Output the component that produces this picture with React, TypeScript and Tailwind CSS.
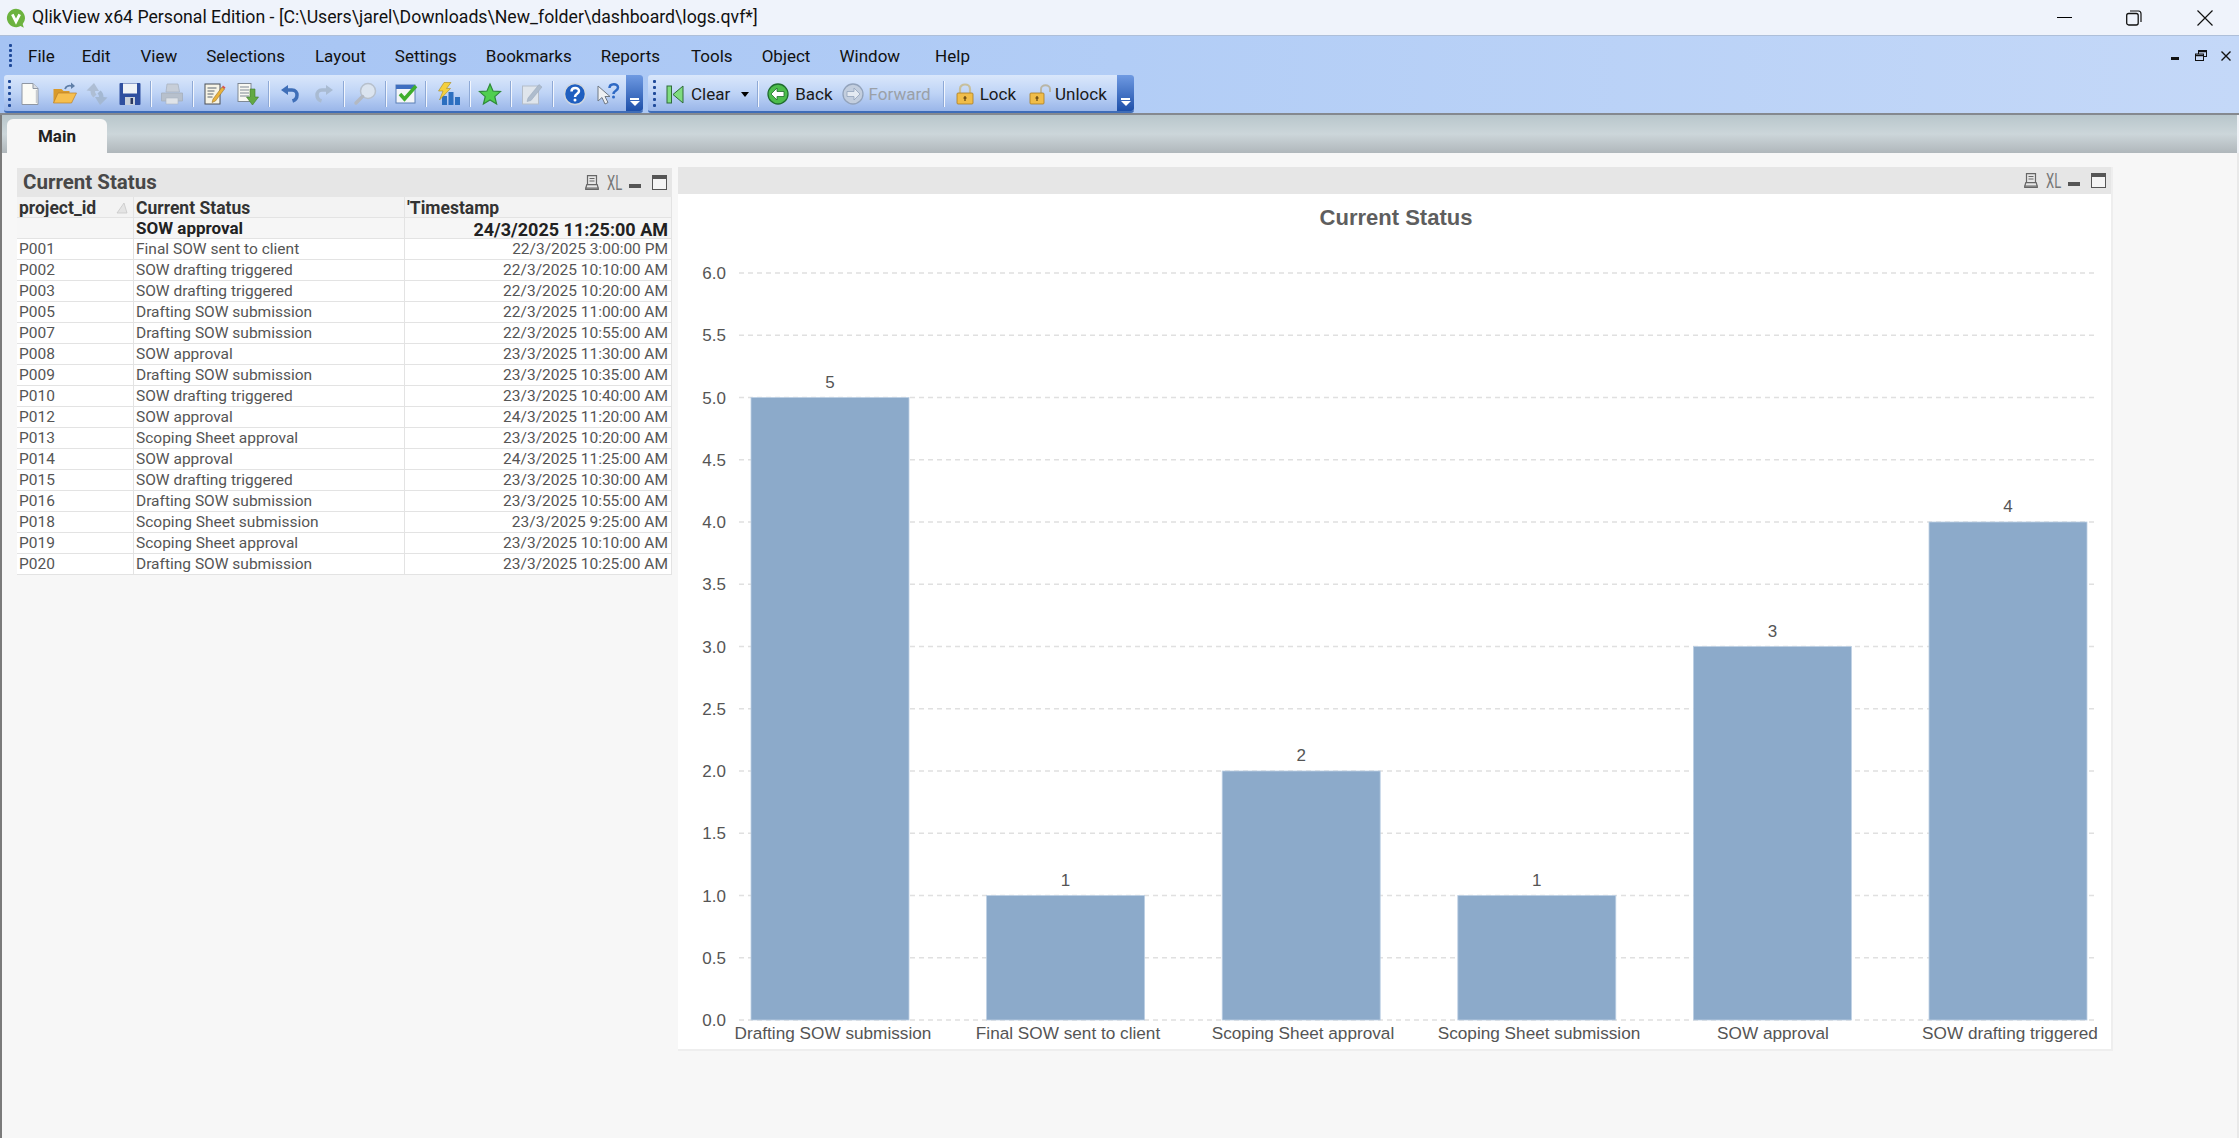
import React from "react";

const ui = "font-['Roboto',sans-serif]";

const Ico = ({ children, className = "" }: { children: React.ReactNode; className?: string }) => (
  <svg viewBox="0 0 24 24" className={"w-[24px] h-[24px] block shrink-0 " + className}>{children}</svg>
);

const NewDoc = () => (
  <Ico>
    <path d="M4 1.500h11l5 5v16H4z" fill="#fbfbf6" stroke="#8f97a3" strokeWidth="1" />
    <path d="M15 1.500v5h5" fill="#d9dde3" stroke="#8f97a3" strokeWidth="1" />
    <path d="M18.500 8v13" stroke="#c9ccd0" strokeWidth="1.500" />
  </Ico>
);
const OpenFolder = () => (
  <Ico>
    <path d="M.5 7h8l2 2h6v12H.5z" fill="#d99a2b" />
    <path d="M.5 21l4.500-10h18.500l-5 10z" fill="#f6bf4f" stroke="#b9802a" strokeWidth=".7" />
    <path d="M12 7c1-3 4-4 7-3" fill="none" stroke="#5f7fa8" strokeWidth="1.800" />
    <path d="M18 .5l4 3.500-4 3z" fill="#5f7fa8" />
  </Ico>
);
const Reload = () => (
  <Ico>
    <path d="M9 1L1.500 8.500l4 .5c0 3 1 5 3 6.500l3-3c-1-.8-1.500-2-1.500-3.500h4z" fill="#aebed4" />
    <path d="M15 23l7.500-7.500-4-.5c0-3-1-5-3-6.500l-3 3c1 .8 1.500 2 1.500 3.500h-4z" fill="#a4b8d2" />
  </Ico>
);
const Save = () => (
  <Ico>
    <rect x="1.500" y="1" width="21" height="22" rx="1" fill="#2f4f9f" />
    <rect x="5" y="1.500" width="14" height="10" fill="#eef2f7" />
    <rect x="7" y="15" width="10" height="8" fill="#c9d1dc" />
    <rect x="12.500" y="16" width="2.500" height="6" fill="#2b3860" />
  </Ico>
);
const Printer = () => (
  <Ico>
    <path d="M7 2h11l1.500 8H6z" fill="#c7ced8" stroke="#aab4c1" strokeWidth=".8" />
    <path d="M1.500 11h21v8h-21z" fill="#b7c0cc" stroke="#a5afbc" strokeWidth=".8" />
    <rect x="6" y="16" width="12" height="6" fill="#dfe3e8" stroke="#aab4c1" strokeWidth=".6" />
  </Ico>
);
const EditNote = () => (
  <Ico>
    <rect x="3" y="2" width="15" height="20" fill="#f7f4e6" stroke="#4a4f57" strokeWidth="1" />
    <path d="M5.500 6h9M5.500 9h7M5.500 12h6M5.500 15h5" stroke="#5a6470" strokeWidth="1" />
    <path d="M11 17l9-12 2.500 2-9 12-3.500 1.500z" fill="#e9b23c" stroke="#8a6420" strokeWidth=".5" />
    <path d="M20 5l1-1.500 2.500 2L22.500 7z" fill="#d9534f" />
  </Ico>
);
const ImportDoc = () => (
  <Ico>
    <rect x="2" y="1.500" width="13" height="18" fill="#f8f8f2" stroke="#77808c" strokeWidth=".9" />
    <path d="M4 5h9M4 8h9M4 11h9M4 14h9" stroke="#7f8894" strokeWidth="1" />
    <path d="M14 7h5v8h3.500l-6 8-6-8H14z" fill="#62a944" stroke="#3f7a2c" strokeWidth=".6" />
  </Ico>
);
const Undo = () => (
  <Ico>
    <path d="M8 8h6c3.500 0 5 2.500 5 5s-1.500 5-4.500 6" fill="none" stroke="#3f6fb8" strokeWidth="3.500" />
    <path d="M3 8l7-5v10z" fill="#3f6fb8" />
  </Ico>
);
const Redo = () => (
  <Ico>
    <path d="M16 8h-6c-3.500 0-5 2.500-5 5s1.500 5 4.500 6" fill="none" stroke="#a9bbd2" strokeWidth="3.500" />
    <path d="M21 8l-7-5v10z" fill="#a9bbd2" />
  </Ico>
);
const Search = () => (
  <Ico>
    <circle cx="15" cy="9" r="7.500" fill="#dbe4ef" stroke="#b7c0cc" strokeWidth="1.500" />
    <path d="M9.500 14.500L3 21" stroke="#b3b9c2" strokeWidth="3.500" strokeLinecap="round" />
  </Ico>
);
const Check = () => (
  <Ico>
    <rect x="2" y="3" width="19" height="18" fill="#f3f5f8" stroke="#5b7fb5" strokeWidth="1" />
    <rect x="2" y="3" width="19" height="4" fill="#3f6fc0" />
    <path d="M6 12l4.500 5L22 4" fill="none" stroke="#3fae2d" strokeWidth="3.500" />
  </Ico>
);
const Chart = () => (
  <Ico>
    <rect x="5" y="14" width="5" height="9" fill="#2c6fc0" />
    <rect x="11.500" y="10" width="5" height="13" fill="#2c6fc0" />
    <rect x="18" y="15" width="5" height="8" fill="#2c6fc0" />
    <path d="M7 .5h7L9.500 6.500h4L2.500 18l3.500-9H1.500z" fill="#f4d03f" stroke="#a88a20" strokeWidth=".6" />
  </Ico>
);
const Star = () => (
  <Ico>
    <path d="M12 2l3 7 7.500.6-5.700 5 1.800 7.400-6.600-4-6.600 4 1.800-7.400-5.700-5L9 9z" fill="#4fce4f" stroke="#2f8a3a" strokeWidth="1.200" />
  </Ico>
);
const EditGrey = () => (
  <Ico>
    <rect x="2.500" y="4" width="16" height="18" fill="#dfe5ec" stroke="#b4bdc9" strokeWidth="1" />
    <path d="M8 16L19 2.500l3 2.500L11 18.500l-4 1z" fill="#aebccd" stroke="#97a7bb" strokeWidth=".5" />
  </Ico>
);
const Help = () => (
  <Ico>
    <circle cx="12" cy="12" r="10.500" fill="#1f5fc0" stroke="#cfd6df" strokeWidth="1.500" />
    <path d="M8.500 9.500c0-4.500 7.500-4.500 7.500-.5 0 3-4 2.500-4 6" fill="none" stroke="#fff" strokeWidth="2.500" />
    <circle cx="12" cy="18" r="1.500" fill="#fff" />
  </Ico>
);
const WhatsThis = () => (
  <Ico>
    <path d="M2 4v15l4-3.500 3 6.500 3-1.500-3-6h5z" fill="#eef0f3" stroke="#6f7884" strokeWidth="1" />
    <path d="M13.500 6c0-5 8.500-5 8.500-.5 0 3.500-4.500 3-4.500 6.500" fill="none" stroke="#2e69c4" strokeWidth="2.500" />
    <circle cx="17.500" cy="15" r="1.500" fill="#2e69c4" />
  </Ico>
);
const ClearIcon = () => (
  <Ico>
    <rect x="4" y="4" width="4.500" height="17" fill="#7fdc7f" stroke="#2e6b3a" strokeWidth="1" />
    <path d="M20 4v17L10 12.500z" fill="#7fdc7f" stroke="#2e6b3a" strokeWidth="1" />
  </Ico>
);
const Nav = ({ on, flip }: { on: boolean; flip?: boolean }) => (
  <Ico>
    <circle cx="12" cy="12" r="10" fill={on ? "#4cbd4c" : "#c3cede"} stroke={on ? "#1f6d2f" : "#93a3bb"} strokeWidth="1.300" />
    <path
      d={flip ? "M13 6l6 6-6 6v-3.500H6v-5h7z" : "M11 6l-6 6 6 6v-3.500h7v-5h-7z"}
      fill={on ? "#fff" : "#e4eaf2"}
      stroke={on ? "#1f6d2f" : "#93a3bb"}
      strokeWidth=".8"
    />
  </Ico>
);
const Lock = ({ open }: { open?: boolean }) => (
  <Ico>
    {open ? (
      <path d="M13 12V7c0-5 9-5 9 0v3" fill="none" stroke="#b9b6a6" strokeWidth="2" />
    ) : (
      <path d="M7 12V7c0-6 10-6 10 0v5" fill="none" stroke="#c7bf9c" strokeWidth="2.200" />
    )}
    <rect x={open ? 2 : 4} y="11" width={open ? 14 : 16} height="11" rx="1" fill="#f0bd4a" stroke="#a97b22" strokeWidth=".8" />
    <path d={open ? "M9 14v5M7.500 16h3" : "M12 14v5M10.500 16h3"} stroke="#6b4b12" strokeWidth="1.300" />
  </Ico>
);

const Grip = ({ className = "" }: { className?: string }) => (
  <div className={"flex flex-col gap-[3px] w-[3px] " + className}>
    {[0, 1, 2, 3, 4].map((i) => (
      <span key={i} className="block w-[3px] h-[3px] bg-[#1f4a9a] rounded-[1px]" />
    ))}
  </div>
);
const Sep = ({ className = "" }: { className?: string }) => (
  <div className={"w-[2px] h-[26px] bg-[#f2f6fd] border-l border-[#8ea9d6] shrink-0 " + className} />
);
const Chevron = () => (
  <div className="ml-auto w-[17px] h-full rounded-r-[3px] bg-gradient-to-b from-[#6f9ae2] to-[#1d4fa9] flex flex-col items-center justify-end pb-[5px] gap-[1px]">
    <span className="block w-[9px] h-[2px] bg-white" />
    <span className="block w-0 h-0 border-x-[5px] border-x-transparent border-t-[5px] border-t-white" />
  </div>
);

const tools: { c: React.ReactNode; m: string }[] = [
  { c: <NewDoc />, m: "ml-[2px]" },
  { c: <OpenFolder />, m: "ml-[11px]" },
  { c: <Reload />, m: "ml-[8px]" },
  { c: <Save />, m: "ml-[9px]" },
  { c: <Sep />, m: "ml-[8px]" },
  { c: <Printer />, m: "ml-[8px]" },
  { c: <Sep />, m: "ml-[8px]" },
  { c: <EditNote />, m: "ml-[8px]" },
  { c: <ImportDoc />, m: "ml-[10px]" },
  { c: <Sep />, m: "ml-[8px]" },
  { c: <Undo />, m: "ml-[8px]" },
  { c: <Redo />, m: "ml-[10px]" },
  { c: <Sep />, m: "ml-[7px]" },
  { c: <Search />, m: "ml-[8px]" },
  { c: <Sep />, m: "ml-[8px]" },
  { c: <Check />, m: "ml-[7px]" },
  { c: <Sep />, m: "ml-[7px]" },
  { c: <Chart />, m: "ml-[10px]" },
  { c: <Sep />, m: "ml-[8px]" },
  { c: <Star />, m: "ml-[7px]" },
  { c: <Sep />, m: "ml-[8px]" },
  { c: <EditGrey />, m: "ml-[8px]" },
  { c: <Sep />, m: "ml-[8px]" },
  { c: <Help />, m: "ml-[9px]" },
  { c: <WhatsThis />, m: "ml-[9px]" },
];

const menus: [string, string][] = [
  ["File", "ml-[16px]"],
  ["Edit", "ml-[27px]"],
  ["View", "ml-[30px]"],
  ["Selections", "ml-[29px]"],
  ["Layout", "ml-[30px]"],
  ["Settings", "ml-[29px]"],
  ["Bookmarks", "ml-[29px]"],
  ["Reports", "ml-[29px]"],
  ["Tools", "ml-[31px]"],
  ["Object", "ml-[29px]"],
  ["Window", "ml-[29px]"],
  ["Help", "ml-[35px]"],
];

const rows: [string, string, string][] = [
  ["P001", "Final SOW sent to client", "22/3/2025 3:00:00 PM"],
  ["P002", "SOW drafting triggered", "22/3/2025 10:10:00 AM"],
  ["P003", "SOW drafting triggered", "22/3/2025 10:20:00 AM"],
  ["P005", "Drafting SOW submission", "22/3/2025 11:00:00 AM"],
  ["P007", "Drafting SOW submission", "22/3/2025 10:55:00 AM"],
  ["P008", "SOW approval", "23/3/2025 11:30:00 AM"],
  ["P009", "Drafting SOW submission", "23/3/2025 10:35:00 AM"],
  ["P010", "SOW drafting triggered", "23/3/2025 10:40:00 AM"],
  ["P012", "SOW approval", "24/3/2025 11:20:00 AM"],
  ["P013", "Scoping Sheet approval", "23/3/2025 10:20:00 AM"],
  ["P014", "SOW approval", "24/3/2025 11:25:00 AM"],
  ["P015", "SOW drafting triggered", "23/3/2025 10:30:00 AM"],
  ["P016", "Drafting SOW submission", "23/3/2025 10:55:00 AM"],
  ["P018", "Scoping Sheet submission", "23/3/2025 9:25:00 AM"],
  ["P019", "Scoping Sheet approval", "23/3/2025 10:10:00 AM"],
  ["P020", "Drafting SOW submission", "23/3/2025 10:25:00 AM"],
];

const CaptionIcons = () => (
  <div className="flex items-center h-full text-[#777]">
    <svg viewBox="0 0 14 15" className="w-[14px] h-[15px]">
      <path d="M2.500.7h9v9h-9zM.7 13h12.600v1.300H.7zM1.800 9.700h10.400l1 3.300H.8zM4.500 3.500h5M4.500 6h5" fill="none" stroke="#666" strokeWidth="1.200" />
    </svg>
    <span className={"ml-[8px] w-[15px] text-[20px] leading-none scale-x-[0.65] origin-left " + ui}>XL</span>
    <span className="ml-[7px] mt-[7px] block w-[12px] h-[4px] bg-[#555]" />
    <span className="ml-[11px] block w-[15px] h-[15px] border-[1.500px] border-t-[4px] border-[#555] bg-[#f4f4f4]" />
  </div>
);

const bars = [
  { x: 751, v: 5, label: "Drafting SOW submission", lx: 833 },
  { x: 986.6, v: 1, label: "Final SOW sent to client", lx: 1068 },
  { x: 1222.2, v: 2, label: "Scoping Sheet approval", lx: 1303 },
  { x: 1457.8, v: 1, label: "Scoping Sheet submission", lx: 1539 },
  { x: 1693.4, v: 3, label: "SOW approval", lx: 1773 },
  { x: 1929, v: 4, label: "SOW drafting triggered", lx: 2010 },
];
const ticks = [6, 5.5, 5, 4.5, 4, 3.5, 3, 2.5, 2, 1.5, 1, 0.5, 0];
const yOf = (v: number) => 1021 - v * 124.5;

const BarChart = () => (
  <svg viewBox="678 195 1433 855" className="w-[1433px] h-[855px] block font-['Liberation_Sans',Arial,sans-serif]">
    <text x="1396" y="225.500" textAnchor="middle" fontSize="22" fontWeight="700" fill="#5e5e5e">
      Current Status
    </text>
    {ticks.map((t) => (
      <g key={t}>
        <line x1="739" x2="2096" y1={yOf(t)} y2={yOf(t)} stroke="#e0e0e0" strokeWidth="1.500" strokeDasharray="5 4" />
        <text x="726" y={yOf(t) + 6} textAnchor="end" fontSize="17" fill="#555">
          {t.toFixed(1)}
        </text>
      </g>
    ))}
    {bars.map((b) => (
      <g key={b.x}>
        <rect x={b.x} y={yOf(b.v)} width="158" height={b.v * 124.5} fill="#8caaca" stroke="#bdd0e4" strokeWidth=".8" />
        <text x={b.x + 79} y={yOf(b.v) - 10} textAnchor="middle" fontSize="17" fill="#555">
          {b.v}
        </text>
        <text x={b.lx} y="1040" textAnchor="middle" fontSize="17.200" fill="#555">
          {b.label}
        </text>
      </g>
    ))}
  </svg>
);

const cell = "px-[3px] pt-[2px] flex items-center border-r border-b border-[#e3e3e3] whitespace-nowrap overflow-hidden";
const head = cell + " font-bold text-[17.500px] text-[#333] bg-[#f3f3f3] !px-[2px]";

export default function App() {
  return (
    <div className={"w-[2239px] h-[1138px] overflow-hidden flex flex-col bg-[#f7f7f7] text-black " + ui}>
      {/* Title bar */}
      <div className="h-[35px] shrink-0 bg-[#eff3fb] flex items-center relative">
        <svg viewBox="0 0 24 24" className="ml-[5px] w-[22px] h-[22px] shrink-0">
          <path d="M12 2a10 10 0 1 0 5 18.700l3.500 1.800-1.200-4A10 10 0 0 0 12 2z" fill="#6cb33f" />
          <path d="M8 8l4 8 4-8" fill="none" stroke="#fff" strokeWidth="3" />
        </svg>
        <span className="ml-[5px] text-[17.700px] text-[#111] whitespace-nowrap">
          QlikView x64 Personal Edition - [C:\Users\jarel\Downloads\New_folder\dashboard\logs.qvf*]
        </span>
        <div className="ml-auto flex items-center h-full">
          <span className="block w-[15px] h-[1px] bg-black" />
          <svg viewBox="0 0 16 16" className="ml-[54px] w-[16px] h-[16px]">
            <rect x=".7" y="3.500" width="11.500" height="11.500" rx="2" fill="none" stroke="#111" strokeWidth="1.300" />
            <path d="M4 1h8.500A2.700 2.700 0 0 1 15 3.700V12" fill="none" stroke="#111" strokeWidth="1.200" />
          </svg>
          <svg viewBox="0 0 16 16" className="ml-[55px] mr-[26px] w-[16px] h-[16px]">
            <path d="M.5.5l15 15M15.500.5l-15 15" stroke="#111" strokeWidth="1.200" />
          </svg>
        </div>
      </div>

      {/* Menu + toolbars */}
      <div className="h-[78px] shrink-0 border-t border-[#aebfd9] bg-gradient-to-r from-[#a5c3f3] via-[#b2cdf6] to-[#c4d8f8]">
        <div className="h-[39px] flex items-center text-[17px] text-[#111] relative">
          <Grip className="ml-[9px] !gap-[2px]" />
          {menus.map(([m, c]) => (
            <span key={m} className={c + " mt-[2px]"}>
              {m}
            </span>
          ))}
          <div className="ml-auto flex items-center mr-[8px]">
            <span className="block w-[8px] h-[3px] mt-[6px] bg-[#111]" />
            <svg viewBox="0 0 12 11" className="ml-[16px] w-[12px] h-[11px]">
              <rect x="3.500" y=".5" width="8" height="6" fill="#c8d9f5" stroke="#111" />
              <rect x=".5" y="4" width="8" height="6.500" fill="#c8d9f5" stroke="#111" />
              <path d="M.5 5.500h8M3.500 1.500h8" stroke="#111" strokeWidth="1.500" />
            </svg>
            <svg viewBox="0 0 10 10" className="ml-[14px] w-[10px] h-[10px]">
              <path d="M.5.5l9 9M9.500.5l-9 9" stroke="#111" strokeWidth="1.400" />
            </svg>
          </div>
        </div>
        <div className="h-[38px] flex">
          <div className="ml-[4px] w-[639px] h-full flex items-center rounded-[3px] border-b-2 border-[#3f6db8] bg-gradient-to-b from-[#dae7fb] via-[#bfd4f6] to-[#9ab6e9]">
            <Grip className="ml-[4px] mr-[5px]" />
            {tools.map((t, i) => (
              <div key={i} className={t.m + " shrink-0 mt-[2px]"}>
                {t.c}
              </div>
            ))}
            <Chevron />
          </div>
          <div className="ml-[5px] w-[486px] h-full flex items-center rounded-[3px] border-b-2 border-[#3f6db8] bg-gradient-to-b from-[#dae7fb] via-[#bfd4f6] to-[#9ab6e9] text-[17px] text-[#1a1a1a]">
            <Grip className="ml-[5px]" />
            <div className="ml-[7px] mt-[2px]">
              <ClearIcon />
            </div>
            <span className="ml-[4px] mt-[3px]">Clear</span>
            <span className="ml-[11px] mt-[2px] w-0 h-0 border-x-[4px] border-x-transparent border-t-[5px] border-t-black" />
            <Sep className="ml-[8px] mt-[2px]" />
            <div className="ml-[7px] mt-[2px]">
              <Nav on />
            </div>
            <span className="ml-[5px] mt-[3px]">Back</span>
            <div className="ml-[8px] mt-[2px]">
              <Nav on={false} flip />
            </div>
            <span className="ml-[4px] mt-[3px] text-[#9aa0a8]">Forward</span>
            <Sep className="ml-[12px] mt-[2px]" />
            <div className="ml-[8px] mt-[2px]">
              <Lock />
            </div>
            <span className="ml-[3px] mt-[3px]">Lock</span>
            <div className="ml-[12px] mt-[2px]">
              <Lock open />
            </div>
            <span className="ml-[3px] mt-[3px]">Unlock</span>
            <Chevron />
          </div>
        </div>
      </div>

      {/* Separator */}
      <div className="h-[2px] shrink-0 bg-[#85898f]" />

      {/* Tab strip */}
      <div className="h-[38px] shrink-0 flex items-end border-l-2 border-[#7b7b7b] border-r-2 border-r-[#eef1f6] bg-gradient-to-b from-[#b8c6cb] via-[#ccd6da] to-[#b0b7bb] pl-[5px]">
        <div className="w-[100px] h-[34px] pt-[2px] rounded-t-[6px] bg-[#f7f7f7] flex items-center justify-center font-bold text-[17px] text-[#222]">
          Main
        </div>
      </div>

      {/* Sheet */}
      <div className="flex-1 border-l-2 border-[#7b7b7b] border-r-2 border-r-[#e9e9e9] pl-[15px] pt-[15px] flex items-start gap-[6px]">
        {/* Table box */}
        <div className="w-[655px] shrink-0">
          <div className="h-[29px] bg-[#e6e6e6] flex items-center justify-between pl-[6px] pr-[5px]">
            <span className="font-bold text-[20.500px] text-[#484848]">Current Status</span>
            <CaptionIcons />
          </div>
          <div className="grid grid-cols-[117px_271px_1fr] auto-rows-[21px] text-[15.500px] text-[#555] bg-white">
            <div className={head + " relative"}>
              project_id
              <svg viewBox="0 0 12 12" className="absolute right-[5px] top-[5px] w-[12px] h-[12px]">
                <path d="M1 11h10L8 1z" fill="#e4e4e4" stroke="#c8c8c8" strokeWidth=".8" />
              </svg>
            </div>
            <div className={head}>Current Status</div>
            <div className={head}>'Timestamp</div>
            <div className={cell + " bg-[#f6f6f6]"} />
            <div className={cell + " font-bold text-[17px] text-[#222] bg-[#f6f6f6] !px-[2px]"}>SOW approval</div>
            <div className={cell + " font-bold text-[18px] text-[#222] bg-[#f6f6f6] justify-end"}>24/3/2025 11:25:00 AM</div>
            {rows.map((r) => (
              <React.Fragment key={r[0]}>
                <div className={cell + " !px-[2px]"}>{r[0]}</div>
                <div className={cell + " !px-[2px]"}>{r[1]}</div>
                <div className={cell + " justify-end"}>{r[2]}</div>
              </React.Fragment>
            ))}
          </div>
        </div>

        {/* Chart box */}
        <div className="w-[1433px] shrink-0 border-b-2 border-r-2 border-[#eeeeee] box-content -mt-[1px]">
          <div className="h-[27px] bg-[#e6e6e6] flex items-center justify-end pr-[5px]">
            <CaptionIcons />
          </div>
          <div className="bg-white">
            <BarChart />
          </div>
        </div>
      </div>
    </div>
  );
}
